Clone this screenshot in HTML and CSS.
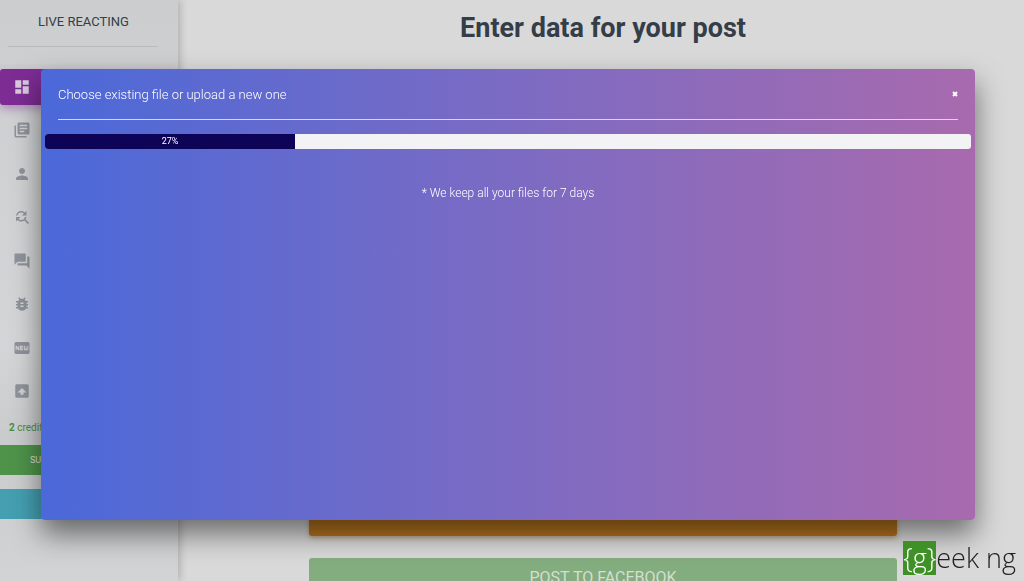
FILE: index.html
```html
<!DOCTYPE html>
<html lang="en">
<head>
    <meta charset="UTF-8">
    <meta name="viewport" content="width=device-width, initial-scale=1.0">
    <title>Live Reacting</title>
    <link rel="stylesheet" href="styles.css">
</head>
<body>
    <div class="page">
        <aside class="sidebar">
            <div class="logo">LIVE REACTING</div>
            <nav class="menu">
                <a href="#" class="active" aria-label="Dashboard">
                    <svg viewBox="0 0 24 24"><path d="M3 13h8V3H3v10zm0 8h8v-6H3v6zm10 0h8V11h-8v10zm0-18v6h8V3h-8z"/></svg>
                </a>
                <a href="#" aria-label="Library">
                    <svg viewBox="0 0 24 24"><path d="M4 6H2v14c0 1.1.9 2 2 2h14v-2H4V6zm16-4H8c-1.1 0-2 .9-2 2v12c0 1.1.9 2 2 2h12c1.1 0 2-.9 2-2V4c0-1.1-.9-2-2-2zm-1 9H9V9h10v2zm-4 4H9v-2h6v2zm4-8H9V5h10v2z"/></svg>
                </a>
                <a href="#" aria-label="Profile">
                    <svg viewBox="0 0 24 24"><path d="M12 12c2.21 0 4-1.79 4-4s-1.79-4-4-4-4 1.79-4 4 1.79 4 4 4zm0 2c-2.67 0-8 1.34-8 4v2h16v-2c0-2.66-5.33-4-8-4z"/></svg>
                </a>
                <a href="#" aria-label="Find">
                    <svg viewBox="0 0 24 24"><path d="M11 6c1.38 0 2.63.56 3.54 1.46L12 10h6V4l-2.05 2.05C14.68 4.78 12.93 4 11 4c-3.53 0-6.43 2.61-6.92 6H6.1c.46-2.28 2.48-4 4.9-4zm5.64 9.14c.66-.9 1.12-1.97 1.28-3.14H15.9c-.46 2.28-2.48 4-4.9 4-1.38 0-2.63-.56-3.54-1.46L10 12H4v6l2.05-2.05C7.32 17.22 9.07 18 11 18c1.55 0 2.98-.51 4.14-1.36L20 21.49 21.49 20l-4.85-4.86z"/></svg>
                </a>
                <a href="#" aria-label="Messages">
                    <svg viewBox="0 0 24 24"><path d="M21 6h-2v9H6v2c0 .55.45 1 1 1h11l4 4V7c0-.55-.45-1-1-1zm-4 6V3c0-.55-.45-1-1-1H3c-.55 0-1 .45-1 1v14l4-4h10c.55 0 1-.45 1-1z"/></svg>
                </a>
                <a href="#" aria-label="Report a bug">
                    <svg viewBox="0 0 24 24"><path d="M20 8h-2.81c-.45-.78-1.07-1.45-1.82-1.96L17 4.41 15.59 3l-2.17 2.17C12.96 5.06 12.49 5 12 5c-.49 0-.96.06-1.41.17L8.41 3 7 4.41l1.62 1.63C7.88 6.55 7.26 7.22 6.81 8H4v2h2.09c-.05.33-.09.66-.09 1v1H4v2h2v1c0 .34.04.67.09 1H4v2h2.81c1.04 1.79 2.97 3 5.19 3s4.15-1.21 5.19-3H20v-2h-2.09c.05-.33.09-.66.09-1v-1h2v-2h-2v-1c0-.34-.04-.67-.09-1H20V8zm-6 8h-4v-2h4v2zm0-4h-4v-2h4v2z"/></svg>
                </a>
                <a href="#" aria-label="What is new">
                    <svg viewBox="0 0 24 24"><path d="M20 4H4c-1.11 0-1.99.89-1.99 2L2 18c0 1.11.89 2 2 2h16c1.11 0 2-.89 2-2V6c0-1.11-.89-2-2-2zM8.5 15H7.3l-2.55-3.5V15H3.5V9h1.25l2.5 3.5V9H8.5v6zm5-4.74H11v1.12h2.5v1.26H11v1.11h2.5V15h-4V9h4v1.26zm7 3.74c0 .55-.45 1-1 1h-4c-.55 0-1-.45-1-1V9h1.25v4.51h1.13V9.99h1.25v3.51h1.12V9h1.25v5z"/></svg>
                </a>
                <a href="#" aria-label="Archive">
                    <svg viewBox="0 0 24 24"><path fill-rule="evenodd" d="M5 3h14a2 2 0 0 1 2 2v14a2 2 0 0 1-2 2H5a2 2 0 0 1-2-2V5c0-1.100.9-2 2-2zm7 5l-6 6h4v3h4v-3h4z"/></svg>
                </a>
            </nav>
            <p class="credits"><b>2</b> credits</p>
            <button type="button" class="side_btn green">SUBSCRIBE</button>
            <button type="button" class="side_btn teal">CONTACT</button>
        </aside>

        <main class="content">
            <h1>Enter data for your post</h1>
            <div class="post_actions">
                <button type="button" class="post_btn orange" aria-label="Choose file"></button>
                <button type="button" class="post_btn facebook">POST TO FACEBOOK</button>
            </div>
        </main>
    </div>

    <div class="overlay">
        <section class="modal" role="dialog" aria-labelledby="modal_title">
            <header class="modal_header">
                <h2 id="modal_title">Choose existing file or upload a new one</h2>
                <button type="button" class="close" aria-label="Close">
                    <svg viewBox="0 0 10 10"><path d="M3 3l4 4M7 3l-4 4"/></svg>
                </button>
            </header>
            <div class="progress" role="progressbar" aria-label="Upload" aria-valuenow="27" aria-valuemin="0" aria-valuemax="100">
                <div class="progress_bar" style="width: 27%">27%</div>
            </div>
            <p class="note">* We keep all your files for 7 days</p>
        </section>
    </div>

    <div class="watermark"><span>{g}</span>eek ng</div>
</body>
</html>
```

FILE: styles.css
```css
*{
    padding: 0;
    margin: 0;
    box-sizing: border-box;
}

body{
    font-family: Roboto, "Liberation Sans", sans-serif;
    font-size: 12px;
    background: #d9d9d9;
    color: #343d48;
    overflow: hidden;
}

button{
    border: none;
    font-family: inherit;
    cursor: pointer;
}

.page{
    display: flex;
    height: 100vh;
}

/* sidebar */
.sidebar{
    width: 178px;
    flex-shrink: 0;
    background: linear-gradient(180deg, #cbcdcf 0%, #cfd0d1 20%, #d3d5d6 60%, #c9cbcc 75%, #d2d3d4 100%);
    box-shadow: 2px 0 8px rgba(0, 0, 0, 0.2);
}

.logo{
    margin: 0 20px 22px 8px;
    padding: 12px 0 15px 30px;
    font-size: 13px;
    line-height: 19px;
    border-bottom: 1px solid #b9bbbd;
}

.menu{
    display: flex;
    flex-direction: column;
    justify-content: space-between;
    height: 340px;
}

.menu a{
    display: flex;
    align-items: center;
    height: 36px;
    padding-left: 13px;
    border-radius: 3px;
}

.menu svg{
    width: 18px;
    height: 18px;
    fill: #8e929b;
}

.menu a.active{
    background: #7d2c94;
    box-shadow: 0 4px 10px rgba(125, 44, 148, 0.4);
}

.menu a.active svg{
    fill: #d9c9dd;
}

.credits{
    padding: 12px 9px 10px;
    font-size: 10px;
    line-height: 14px;
    color: #4a8c43;
}

.side_btn{
    display: block;
    width: 100%;
    height: 30px;
    margin-bottom: 14px;
    padding-left: 30px;
    font-size: 9px;
    text-align: left;
    color: #dcdcdc;
}

.side_btn.green{
    background: #4f934a;
}

.side_btn.teal{
    padding-left: 42px;
    background: #449fb1;
}

/* main content */
.content{
    flex: 1;
    display: flex;
    flex-direction: column;
    align-items: center;
    padding: 10px 0 0 4px;
}

.content h1{
    font-size: 27px;
    line-height: 36px;
    font-weight: 700;
}

.post_actions{
    display: flex;
    flex-direction: column;
    gap: 22px;
    width: 70%;
    padding: 0 1px;
    margin-top: 450px;
}

.post_btn{
    height: 40px;
    flex-shrink: 0;
    border-radius: 3px;
    font-size: 16px;
    color: #d3dfd1;
}

.post_btn.orange{
    background: #b8751f;
    box-shadow: 0 2px 5px rgba(130, 80, 10, 0.4);
}

.post_btn.facebook{
    height: 38px;
    background: #84ad7f;
}

/* upload modal */
.overlay{
    position: fixed;
    inset: 0;
    display: flex;
    padding: 69px 49px 61px 41px;
}

.modal{
    flex: 1;
    padding: 0 4px;
    border-radius: 4px;
    color: #fff;
    background: linear-gradient(90deg, #4b69d9, #7b6bc3 50%, #a86aae);
    box-shadow: 0 14px 28px rgba(0, 0, 0, 0.5);
}

.modal_header{
    display: flex;
    align-items: center;
    justify-content: space-between;
    height: 51px;
    margin: 0 13px 14px;
    border-bottom: 1px solid #d6d8f0;
}

.modal_header h2{
    font-size: 13px;
    font-weight: 300;
}

.close{
    width: 10px;
    height: 10px;
    margin-right: -2px;
    background: none;
}

.close svg{
    display: block;
    stroke: #fff;
    stroke-width: 2;
}

.progress{
    height: 15px;
    border-radius: 3px;
    background: #f3f3f5;
    overflow: hidden;
}

.progress_bar{
    height: 100%;
    background: #0d0357;
    font-size: 9px;
    line-height: 15px;
    text-align: center;
}

.note{
    margin-top: 36px;
    font-weight: 300;
    line-height: 16px;
    text-align: center;
}

.watermark{
    position: fixed;
    right: 8px;
    bottom: 6px;
    display: flex;
    font-family: "Open Sans", sans-serif;
    font-size: 27px;
    font-weight: 300;
    line-height: 34px;
    color: #222;
}

.watermark span{
    background: #3f9127;
    color: #fff;
}
```
